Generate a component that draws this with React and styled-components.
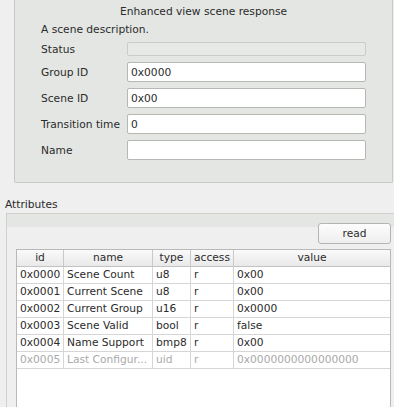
import React from "react";
import styled, { createGlobalStyle } from "styled-components";

const Global = createGlobalStyle`
  html, body {
    margin: 0;
    padding: 0;
    height: 407px;
    overflow: hidden;
    background: #efefef;
  }
  body {
    font-family: "DejaVu Sans", "Liberation Sans", sans-serif;
    font-size: 10.667px;
    line-height: 13px;
    color: #2b2b2b;
  }
`;

const Page = styled.div`
  display: flex;
  flex-direction: column;
  width: 394px;
  height: 407px;
`;

const Panel = styled.section`
  margin-left: 14px;
  width: 379px;
  box-sizing: border-box;
  background: #e3e6e2;
  border: 1px solid #c6c9c4;
  border-top: none;
  border-radius: 0 0 2px 2px;
  padding: 5px 26px 22px 26px;
  display: flex;
  flex-direction: column;
`;

const Title = styled.div`
  text-align: center;
  height: 13px;
`;

const Desc = styled.div`
  margin-top: 5px;
  height: 13px;
`;

const Form = styled.div`
  margin-top: 6px;
  display: grid;
  grid-template-columns: 86px 1fr;
  row-gap: 6px;
  align-items: center;
`;

const Label = styled.div`
  white-space: nowrap;
`;

const Field = styled.div`
  box-sizing: border-box;
  height: ${(p) => (p.$disabled ? 14 : 20)}px;
  background: ${(p) => (p.$disabled ? "#e6e9e5" : "#ffffff")};
  border: 1px solid ${(p) => (p.$disabled ? "#c9ccc7" : "#b5b8b3")};
  border-radius: 2px;
  padding: 0 3px;
  display: flex;
  align-items: center;
`;

const SectionLabel = styled.div`
  margin-top: 15px;
  padding-left: 5px;
  height: 13px;
`;

const Frame = styled.div`
  margin-top: 2px;
  margin-left: 6px;
  border-top: 1px solid #cfd1cd;
  border-left: 1px solid #cfd1cd;
  background: linear-gradient(#e3e6e2 0, #e3e6e2 13px, #efefef 13px);
  padding: 9px 3px 0 9px;
  display: flex;
  flex-direction: column;
  flex: 1;
  min-height: 0;
`;

const ButtonRow = styled.div`
  display: flex;
  justify-content: flex-end;
`;

const Button = styled.button`
  width: 73px;
  height: 21px;
  box-sizing: border-box;
  border: 1px solid #b4b4b4;
  border-radius: 3px;
  background: linear-gradient(#fdfdfd, #eeeeee);
  font: inherit;
  color: #2b2b2b;
  padding: 0;
`;

const Table = styled.div`
  margin-top: 5px;
  margin-right: 1px;
  width: 375px;
  box-sizing: border-box;
  border: 1px solid #b9b9b9;
  border-bottom: none;
  background: #ffffff;
  flex: 1;
`;

const Row = styled.div`
  display: grid;
  grid-template-columns: 47px 89px 38px 43px 1fr;
  height: 17px;
  box-sizing: border-box;
  border-bottom: 1px solid ${(p) => (p.$head ? "#c2c2c2" : "#d6d6d6")};
  background: ${(p) => (p.$head ? "linear-gradient(#fafafa, #e9e9e9)" : "#ffffff")};
  color: ${(p) => (p.$dim ? "#a9a9a9" : "#2b2b2b")};
`;

const Cell = styled.div`
  box-sizing: border-box;
  border-right: 1px solid ${(p) => (p.$head ? "#c9c9c9" : "#d6d6d6")};
  padding: ${(p) => (p.$head ? "0" : "0 0 0 3px")};
  text-align: ${(p) => (p.$head ? "center" : "left")};
  line-height: 16px;
  white-space: nowrap;
  overflow: hidden;
  text-overflow: ${(p) => (p.$clip ? "ellipsis" : "clip")};
  &:last-child {
    border-right: none;
  }
`;

const fields = [
  { label: "Group ID", value: "0x0000" },
  { label: "Scene ID", value: "0x00" },
  { label: "Transition time", value: "0" },
  { label: "Name", value: "" },
];

const cols = ["id", "name", "type", "access", "value"];

const rows = [
  ["0x0000", "Scene Count", "u8", "r", "0x00"],
  ["0x0001", "Current Scene", "u8", "r", "0x00"],
  ["0x0002", "Current Group", "u16", "r", "0x0000"],
  ["0x0003", "Scene Valid", "bool", "r", "false"],
  ["0x0004", "Name Support", "bmp8", "r", "0x00"],
  ["0x0005", "Last Configur...", "uid", "r", "0x0000000000000000", true],
];

export default function App() {
  return (
    <Page>
      <Global />
      <Panel>
        <Title>Enhanced view scene response</Title>
        <Desc>A scene description.</Desc>
        <Form>
          <Label>Status</Label>
          <Field $disabled />
          {fields.map((f) => (
            <React.Fragment key={f.label}>
              <Label>{f.label}</Label>
              <Field>{f.value}</Field>
            </React.Fragment>
          ))}
        </Form>
      </Panel>
      <SectionLabel>Attributes</SectionLabel>
      <Frame>
        <ButtonRow>
          <Button>read</Button>
        </ButtonRow>
        <Table>
          <Row $head>
            {cols.map((c) => (
              <Cell $head key={c}>
                {c}
              </Cell>
            ))}
          </Row>
          {rows.map((r) => (
            <Row key={r[0]} $dim={r[5]}>
              {r.slice(0, 5).map((v, i) => (
                <Cell key={i}>{v}</Cell>
              ))}
            </Row>
          ))}
        </Table>
      </Frame>
    </Page>
  );
}
